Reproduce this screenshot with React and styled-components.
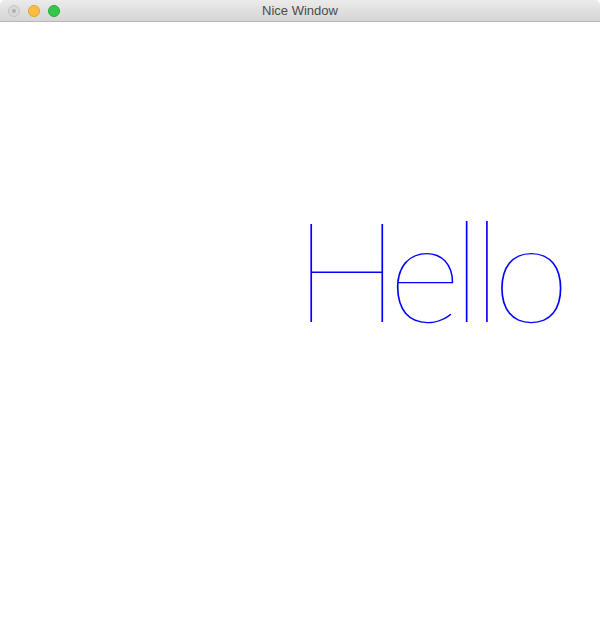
import React from "react";
import styled, { createGlobalStyle } from "styled-components";

const GlobalStyle = createGlobalStyle`
  html, body {
    margin: 0;
    padding: 0;
    background: #ffffff;
  }
  body {
    font-family: "Liberation Sans", Arial, sans-serif;
  }
`;

const Window = styled.div`
  width: 600px;
  height: 622px;
  display: flex;
  flex-direction: column;
  background: #ffffff;
  overflow: hidden;
`;

const TitleBar = styled.div`
  height: 22px;
  flex: none;
  display: flex;
  align-items: center;
  position: relative;
  box-sizing: border-box;
  background: linear-gradient(#ebebeb, #d5d5d5);
  border-bottom: 1px solid #b8b8b8;
  border-radius: 5px 5px 0 0;
`;

const Lights = styled.div`
  display: flex;
  gap: 8px;
  padding-left: 8px;
`;

const Light = styled.div`
  width: 12px;
  height: 12px;
  border-radius: 50%;
  box-sizing: border-box;
  background: ${(p) => p.color};
  border: 1px solid ${(p) => p.edge};
  display: flex;
  align-items: center;
  justify-content: center;
`;

const Dot = styled.div`
  width: 4px;
  height: 4px;
  border-radius: 50%;
  background: #b0b0b0;
`;

const Title = styled.div`
  position: absolute;
  left: 0;
  right: 0;
  text-align: center;
  font-family: "Liberation Sans", Arial, sans-serif;
  font-size: 13px;
  color: #4c4c4c;
  pointer-events: none;
`;

const Canvas = styled.div`
  flex: 1;
  padding-top: 175px;
  padding-left: 294px;
`;

const Hello = styled.div`
  font-family: Lato, "DejaVu Sans", sans-serif;
  font-weight: 100;
  font-size: 141px;
  letter-spacing: -9px;
  line-height: 1;
  color: #0000ff;
  white-space: nowrap;
`;

export default function App() {
  return (
    <>
      <GlobalStyle />
      <Window>
        <TitleBar>
          <Lights>
            <Light color="#d9d9d9" edge="#c3c3c3">
              <Dot />
            </Light>
            <Light color="#fdbc40" edge="#dea236" />
            <Light color="#34c84a" edge="#27aa35" />
          </Lights>
          <Title>Nice Window</Title>
        </TitleBar>
        <Canvas>
          <Hello>Hello</Hello>
        </Canvas>
      </Window>
    </>
  );
}
